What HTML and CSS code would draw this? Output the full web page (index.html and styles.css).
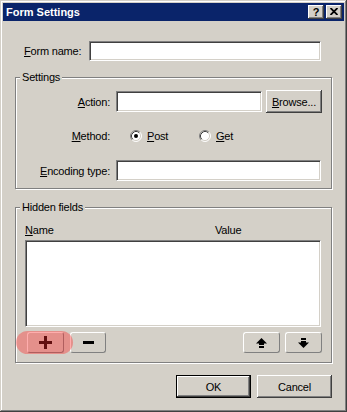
FILE: index.html
```html
<!DOCTYPE html>
<html>
<head>
<meta charset="utf-8">
<link rel="stylesheet" href="styles.css">
</head>
<body>
<div class="window">
  <div class="titlebar">
    <span class="title">Form Settings</span>
    <div class="caption-btns">
      <span class="cbtn help">?</span>
      <span class="cbtn close">
        <svg width="8" height="7" viewBox="0 0 8 7"><path d="M0.5 0 L7.5 7 M7.5 0 L0.5 7" stroke="#000" stroke-width="1.8" fill="none"/></svg>
      </span>
    </div>
  </div>
  <div class="content">
    <div class="name-row">
      <label class="name-label"><u>F</u>orm name:</label>
      <div class="input name-input"></div>
    </div>

    <div class="group settings">
      <span class="legend">Settings</span>
      <div class="srow action-row">
        <label class="slabel"><u>A</u>ction:</label>
        <div class="input action-input"></div>
        <div class="btn browse"><span><u>B</u>rowse...</span></div>
      </div>
      <div class="srow method-row">
        <label class="slabel"><u>M</u>ethod:</label>
        <span class="radio post">
          <svg width="12" height="12" viewBox="0 0 12 12">
            <circle cx="6" cy="6" r="5" fill="#fff"/>
            <path d="M2.11 9.89 A5.5 5.5 0 0 1 9.89 2.11" stroke="#808080" fill="none"/>
            <path d="M9.89 2.11 A5.5 5.5 0 0 1 2.11 9.89" stroke="#fff" fill="none"/>
            <path d="M2.82 9.18 A4.5 4.5 0 0 1 9.18 2.82" stroke="#404040" fill="none"/>
            <path d="M9.18 2.82 A4.5 4.5 0 0 1 2.82 9.18" stroke="#d4d0c8" fill="none"/>
            <circle cx="6" cy="6" r="2" fill="#000"/>
          </svg>
          <span><u>P</u>ost</span>
        </span>
        <span class="radio get">
          <svg width="12" height="12" viewBox="0 0 12 12">
            <circle cx="6" cy="6" r="5" fill="#fff"/>
            <path d="M2.11 9.89 A5.5 5.5 0 0 1 9.89 2.11" stroke="#808080" fill="none"/>
            <path d="M9.89 2.11 A5.5 5.5 0 0 1 2.11 9.89" stroke="#fff" fill="none"/>
            <path d="M2.82 9.18 A4.5 4.5 0 0 1 9.18 2.82" stroke="#404040" fill="none"/>
            <path d="M9.18 2.82 A4.5 4.5 0 0 1 2.82 9.18" stroke="#d4d0c8" fill="none"/>
          </svg>
          <span><u>G</u>et</span>
        </span>
      </div>
      <div class="srow enc-row">
        <label class="slabel"><u>E</u>ncoding type:</label>
        <div class="input enc-input"></div>
      </div>
    </div>

    <div class="group hidden">
      <span class="legend">Hidden fields</span>
      <div class="list-head">
        <span class="col-name"><u>N</u>ame</span>
        <span class="col-value">Value</span>
      </div>
      <div class="input listbox"></div>
      <div class="tools">
        <div class="add-wrap">
          <div class="tbtn add">
            <svg width="13" height="13" viewBox="0 0 13 13"><rect x="0" y="5" width="13" height="3" fill="#000"/><rect x="5" y="0" width="3" height="13" fill="#000"/></svg>
          </div>
          <span class="highlight"></span>
        </div>
        <div class="tbtn remove">
          <svg width="11" height="3" viewBox="0 0 11 3"><rect x="0" y="0" width="11" height="3" fill="#000"/></svg>
        </div>
        <div class="tbtn up">
          <svg width="11" height="10" viewBox="0 0 11 10"><polygon points="5.5,0 0,5.5 11,5.5" fill="#000"/><rect x="3" y="5" width="5" height="2" fill="#000"/><rect x="3" y="8" width="5" height="2" fill="#000"/></svg>
        </div>
        <div class="tbtn down">
          <svg width="11" height="10" viewBox="0 0 11 10"><rect x="3" y="0" width="5" height="2" fill="#000"/><rect x="3" y="3" width="5" height="2" fill="#000"/><polygon points="0,4.5 11,4.5 5.5,10" fill="#000"/></svg>
        </div>
      </div>
    </div>

    <div class="dialog-btns">
      <div class="btn default"><span>OK</span></div>
      <div class="btn"><span>Cancel</span></div>
    </div>
  </div>
</div>
</body>
</html>
```
FILE: styles.css
```css
html, body {
  margin: 0;
  padding: 0;
  background: #d4d0c8;
}

.window {
  width: 347px;
  height: 412px;
  box-sizing: border-box;
  padding: 3px;
  background: #d4d0c8;
  box-shadow: inset -1px -1px #404040, inset 1px 1px #d4d0c8, inset -2px -2px #808080, inset 2px 2px #fff;
  font-family: "Liberation Sans", Arial, sans-serif;
  font-size: 11px;
  letter-spacing: -0.2px;
  color: #000;
  display: flex;
  flex-direction: column;
}

.titlebar {
  height: 18px;
  box-sizing: border-box;
  background: #0a246a;
  display: flex;
  align-items: center;
  justify-content: space-between;
  padding: 0 2px 0 3px;
}

.title {
  color: #fff;
  font-weight: bold;
  letter-spacing: 0;
}

.caption-btns {
  display: flex;
  gap: 2px;
}

.cbtn {
  width: 16px;
  height: 14px;
  box-sizing: border-box;
  background: #d4d0c8;
  box-shadow: inset -1px -1px #404040, inset 1px 1px #fff, inset -2px -2px #808080;
  display: flex;
  align-items: center;
  justify-content: center;
  font-weight: bold;
  font-size: 11px;
  line-height: 14px;
  letter-spacing: 0;
  padding-bottom: 1px;
}

.content {
  padding: 20px 12px 0;
  display: flex;
  flex-direction: column;
}

.input {
  background: #fff;
  box-sizing: border-box;
  border: 1px solid;
  border-color: #808080 #fff #fff #808080;
  box-shadow: inset 1px 1px #404040, inset -1px -1px #d4d0c8;
}

.btn {
  box-sizing: border-box;
  width: 75px;
  height: 23px;
  background: #d4d0c8;
  box-shadow: inset -1px -1px #404040, inset 1px 1px #fff, inset -2px -2px #808080, inset 2px 2px #d4d0c8;
  display: flex;
  align-items: center;
  justify-content: center;
}

.btn.default {
  border: 1px solid #000;
}

/* Form name row */
.name-row {
  display: flex;
  align-items: center;
  height: 20px;
  padding-left: 9px;
}

.name-label {
  width: 65px;
}

.name-input {
  width: 232px;
  height: 20px;
}

/* Group boxes */
.group {
  position: relative;
  box-sizing: border-box;
  border: 1px solid #808080;
  box-shadow: inset 1px 1px #fff, 1px 1px #fff;
}

.legend {
  position: absolute;
  top: -7px;
  left: 4px;
  padding: 0 2px;
  line-height: 13px;
  background: #d4d0c8;
}

.settings {
  margin-top: 16px;
  height: 112px;
  padding-top: 12px;
}

.srow {
  display: flex;
  align-items: center;
}

.slabel {
  width: 94px;
  margin-right: 6px;
  text-align: right;
}

.action-row {
  height: 23px;
}

.action-input {
  width: 146px;
  height: 21px;
  margin-right: 4px;
}

.browse {
  width: 56px;
}

.method-row {
  height: 20px;
  margin-top: 13px;
}

.radio {
  display: flex;
  align-items: center;
  gap: 5px;
}

.radio svg {
  display: block;
}

.post {
  margin-left: 14px;
  width: 69px;
}

.enc-row {
  height: 21px;
  margin-top: 14px;
}

.enc-input {
  width: 205px;
  height: 21px;
}

/* Hidden fields */
.hidden {
  margin-top: 18px;
  height: 156px;
  padding: 16px 9px 0 9px;
}

.list-head {
  display: flex;
  height: 13px;
  line-height: 13px;
}

.col-name {
  width: 190px;
}

.listbox {
  margin-top: 3px;
  width: 296px;
  height: 87px;
}

.tools {
  margin-top: 5px;
  display: flex;
  align-items: center;
  padding-left: 2px;
}

.add-wrap {
  position: relative;
  margin-right: 6px;
}

.tbtn {
  box-sizing: border-box;
  width: 37px;
  height: 21px;
  background: #d4d0c8;
  border: 1px solid;
  border-color: #fff #808080 #808080 #fff;
  border-radius: 3px;
  display: flex;
  align-items: center;
  justify-content: center;
}

.tbtn svg {
  display: block;
}

.remove {
  width: 36px;
}

.up {
  margin-left: auto;
  margin-right: 5px;
}

.highlight {
  position: absolute;
  left: -11px;
  top: -1px;
  width: 57px;
  height: 23px;
  border-radius: 12px;
  background: rgba(255, 40, 40, 0.38);
  pointer-events: none;
}

/* Dialog buttons */
.dialog-btns {
  margin-top: 12px;
  display: flex;
  justify-content: flex-end;
  gap: 6px;
}
```
